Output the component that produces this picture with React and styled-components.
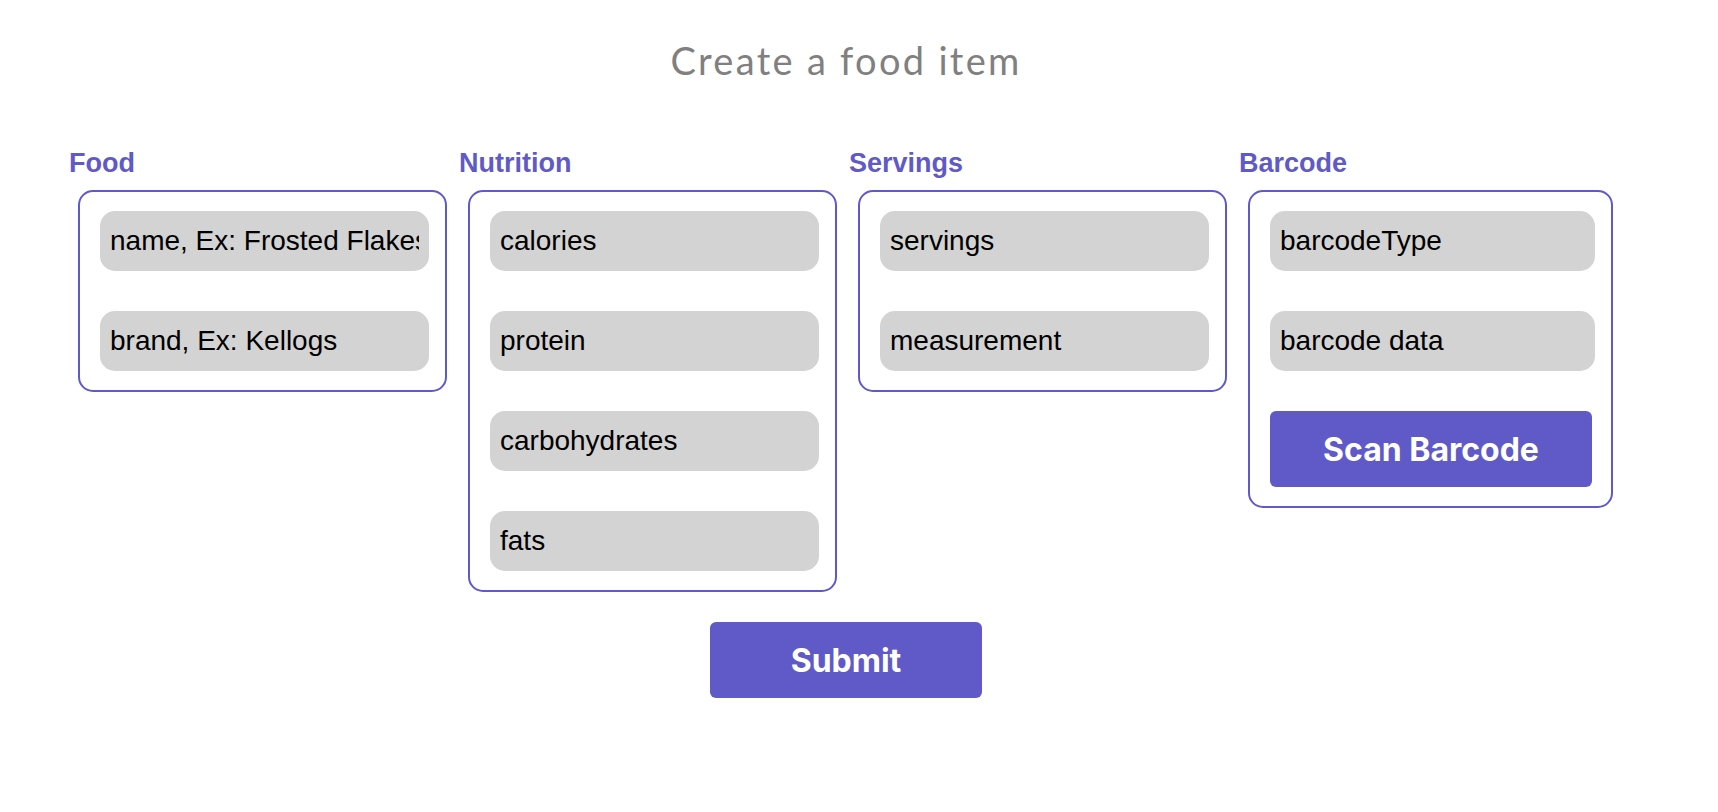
import React from 'react';
import styled, { createGlobalStyle } from 'styled-components';

const GlobalStyle = createGlobalStyle`
  html, body {
    margin: 0;
    padding: 0;
    background: #fff;
  }
`;

const Page = styled.div`
  width: 1692px;
  display: flex;
  flex-direction: column;
  align-items: center;
  padding-top: 37px;
`;

const Title = styled.h1`
  margin: 0;
  font-family: Lato, 'Noto Sans', sans-serif;
  font-weight: 400;
  font-size: 38px;
  line-height: 46px;
  letter-spacing: 2.3px;
  color: #808080;
`;

const Sections = styled.div`
  align-self: stretch;
  display: flex;
  padding-left: 69px;
  margin-top: 67px;
`;

const Column = styled.div`
  width: 390px;
  display: flex;
  flex-direction: column;
  align-items: flex-start;
`;

const Label = styled.h3`
  margin: 0;
  font-family: 'Liberation Sans', Arial, sans-serif;
  font-weight: 700;
  font-size: 27px;
  line-height: 27px;
  color: #5f5ac8;
`;

const Box = styled.div`
  box-sizing: border-box;
  width: ${(p) => p.$width || 369}px;
  margin: 13px 0 0 9px;
  padding: 19px 16px 19px 20px;
  border: 2px solid #5f5ac8;
  border-radius: 15px;
  display: flex;
  flex-direction: column;
  gap: 40px;
`;

const Input = styled.input`
  box-sizing: border-box;
  width: 100%;
  height: 60px;
  padding: 0 10px;
  border: none;
  outline: none;
  border-radius: 15px;
  background: #d3d3d3;
  font-family: 'Liberation Sans', Arial, sans-serif;
  font-size: 28px;
  color: #000;

  &::placeholder {
    color: #000;
    opacity: 1;
  }
`;

const Button = styled.button`
  box-sizing: border-box;
  width: ${(p) => p.$width}px;
  height: 76px;
  border: none;
  border-radius: 6px;
  background: #5f5ac8;
  color: #fff;
  font-family: Inter, 'Liberation Sans', sans-serif;
  font-weight: 700;
  font-size: 32px;
  cursor: pointer;
`;

const SubmitRow = styled.div`
  margin-top: 30px;
`;

const sections = [
  { title: 'Food', fields: ['name, Ex: Frosted Flakes', 'brand, Ex: Kellogs'] },
  { title: 'Nutrition', fields: ['calories', 'protein', 'carbohydrates', 'fats'] },
  { title: 'Servings', fields: ['servings', 'measurement'] },
  { title: 'Barcode', fields: ['barcodeType', 'barcode data'], width: 365, scan: true },
];

export default function App() {
  return (
    <>
      <GlobalStyle />
      <Page>
        <Title>Create a food item</Title>
        <Sections>
          {sections.map((s) => (
            <Column key={s.title}>
              <Label>{s.title}</Label>
              <Box $width={s.width}>
                {s.fields.map((f) => (
                  <Input key={f} placeholder={f} />
                ))}
                {s.scan && <Button $width={322}>Scan Barcode</Button>}
              </Box>
            </Column>
          ))}
        </Sections>
        <SubmitRow>
          <Button $width={272}>Submit</Button>
        </SubmitRow>
      </Page>
    </>
  );
}
